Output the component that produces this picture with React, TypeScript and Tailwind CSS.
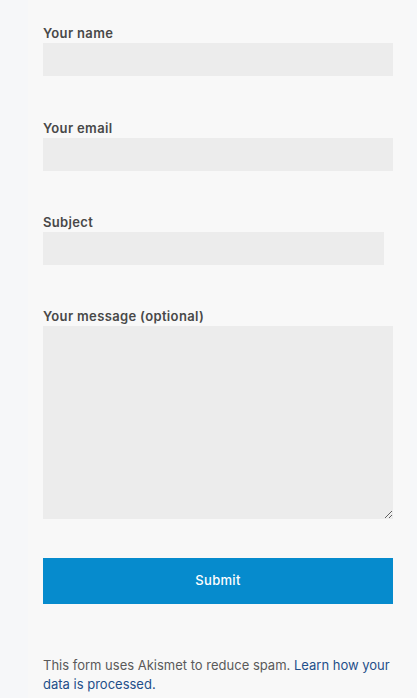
const font = { fontFamily: "Inter, 'Open Sans', sans-serif" };

function Field({ label, className, gap }: { label: string; className?: string; gap: string }) {
  return (
    <div className={gap}>
      <label className="block text-[13px] leading-[20px] font-semibold tracking-[0.35px] text-[#484848]">
        {label}
      </label>
      <input
        type="text"
        className={`block h-[33px] bg-[#ececec] border-0 outline-none ${className ?? "w-full"}`}
      />
    </div>
  );
}

export default function App() {
  return (
    <div className="flex min-h-screen bg-[#f8f8f8]" style={font}>
      <div className="w-[28px] shrink-0 bg-[#f6f7f9]" />
      <div className="flex-1 pl-[15px] pr-[17px] pt-[23px]">
        <form onSubmit={(e) => e.preventDefault()}>
          <Field label="Your name" gap="mb-[42px]" />
          <Field label="Your email" gap="mb-[41px]" />
          <Field label="Subject" className="w-[341px]" gap="mb-[41px]" />
          <div>
            <label className="block text-[13px] leading-[20px] font-semibold tracking-[0.35px] text-[#484848]">
              Your message (optional)
            </label>
            <textarea className="block w-full h-[193px] bg-[#ececec] border-0 outline-none resize-y" />
          </div>
          <button
            type="submit"
            className="mt-[39px] block w-full h-[46px] bg-[#068bcd] text-white text-[13px] font-medium tracking-[0.3px]"
          >
            Submit
          </button>
        </form>
        <p className="mt-[52px] text-[13px] leading-[19px] text-[#5a5a5a]">
          This form uses Akismet to reduce spam.{" "}
          <a href="#" className="text-[#1f4f8a]">
            Learn how your data is processed.
          </a>
        </p>
      </div>
      <div className="w-[7px] shrink-0 bg-[#f6f7f9]" />
    </div>
  );
}
